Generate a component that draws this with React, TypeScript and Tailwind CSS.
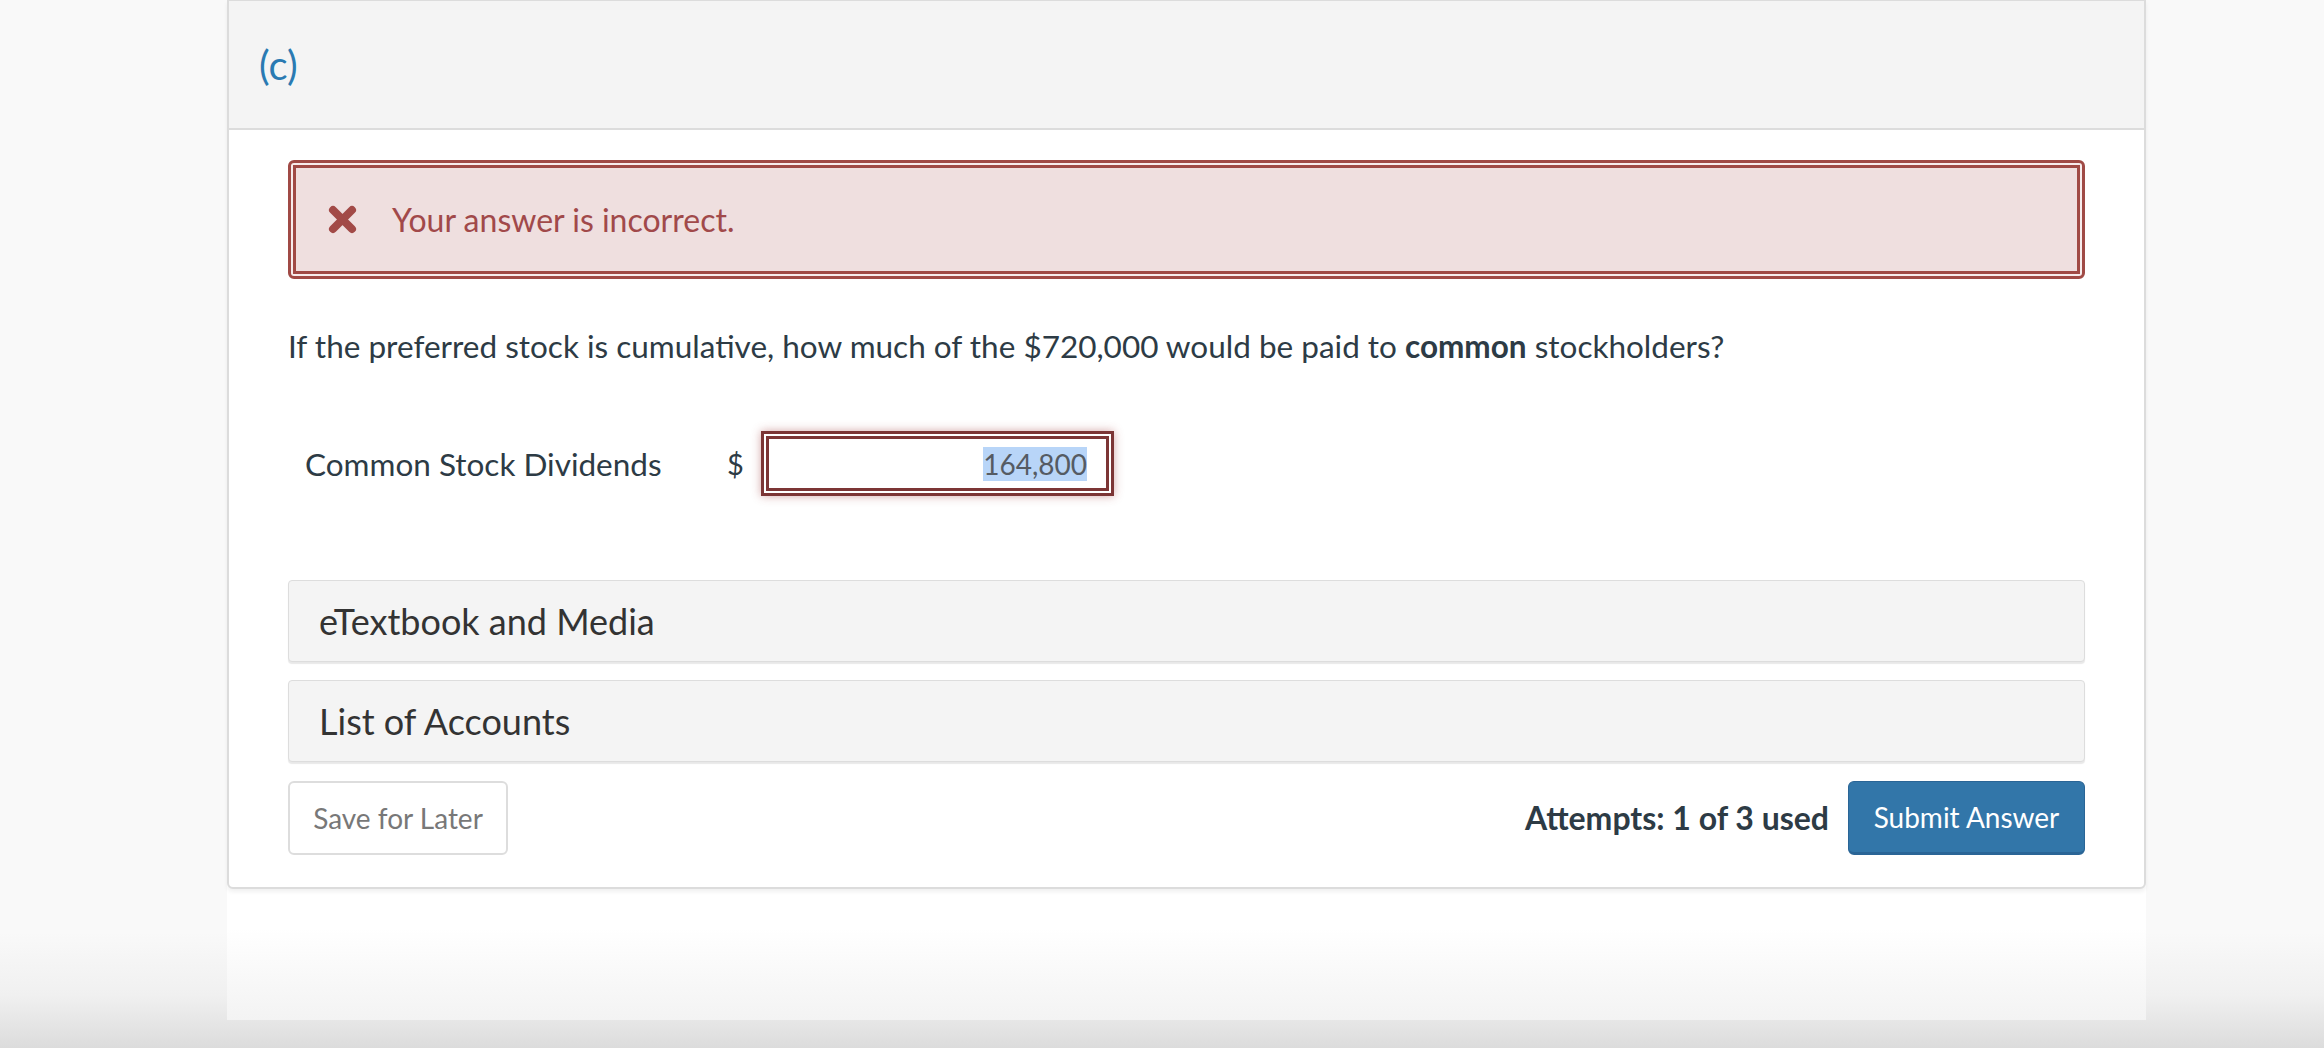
import React from 'react';

function TimesIcon() {
  return (
    <svg width="29" height="29" viewBox="0 0 29 29" className="shrink-0">
      <path d="M5 5 L24 24 M24 5 L5 24" stroke="#a24a47" strokeWidth="8" strokeLinecap="round" />
    </svg>
  );
}

export default function App() {
  return (
    <div className="min-h-[1048px] flex flex-col bg-[linear-gradient(to_bottom,#f9f9f9_0%,#f9f9f9_89%,#f0f0f0_95%,#e6e6e6_97.5%,#dcdcdc_100%)] font-['Lato','Open_Sans',sans-serif] text-[#2d3b45]">
      <div className="ml-[227px] w-[1919px] h-[1020px] flex flex-col bg-[linear-gradient(to_bottom,#ffffff_0%,#ffffff_91%,#f3f3f3_100%)]">
        <section className="bg-white border-2 border-t border-[#dcdcdc] rounded-b-[6px] shadow-[0_3px_4px_rgba(0,0,0,0.06)]">
          {/* header */}
          <div className="h-[129px] bg-[#f4f4f4] border-b-2 border-[#dcdcdc] flex items-center pl-[30px]">
            <span className="text-[40px] text-[#2a7ab2]">(c)</span>
          </div>

          <div className="px-[59px] pt-[30px] pb-[32px]">
            {/* alert */}
            <div className="h-[119px] rounded-[6px] border-[3px] border-[#a04a45] p-[2px] bg-[#f7ecec]">
              <div className="h-full border-[3px] border-[#a04a45] bg-[#efdfdf] flex items-center pl-[32px] gap-[35px]">
                <TimesIcon />
                <span className="text-[32px] text-[#a1494a]">Your answer is incorrect.</span>
              </div>
            </div>

            {/* question */}
            <p className="mt-[47px] text-[31.5px] leading-[40px] text-[#2d3b45]">
              If the preferred stock is cumulative, how much of the $720,000 would be paid to{' '}
              <b className="font-bold">common</b> stockholders?
            </p>

            <div className="mt-[65px] flex items-center pl-[17px]">
              <span className="w-[422px] text-[31.5px] leading-[40px]">Common Stock Dividends</span>
              <span className="text-[29px] leading-[40px] w-[34px]">$</span>
              <div className="w-[353px] h-[65px] border-[3px] border-[#7c3535] p-[2px] bg-white shadow-[0_0_9px_rgba(160,60,60,0.45)]">
                <div className="h-full border-[3px] border-[#7c3535] flex items-center justify-end pr-[19px]">
                  <span className="text-[28px] leading-[34px] bg-[#b8d5f8] text-[#555b63]">164,800</span>
                </div>
              </div>
            </div>

            {/* panels */}
            <div className="mt-[84px] h-[82px] rounded-[4px] border border-[#dddddd] bg-[#f4f4f4] shadow-[0_2px_1px_rgba(0,0,0,0.09)] flex items-center pl-[30px]">
              <span className="text-[36px] text-[#333333]">eTextbook and Media</span>
            </div>
            <div className="mt-[18px] h-[82px] rounded-[4px] border border-[#dddddd] bg-[#f4f4f4] shadow-[0_2px_1px_rgba(0,0,0,0.09)] flex items-center pl-[30px]">
              <span className="text-[36px] text-[#333333]">List of Accounts</span>
            </div>

            {/* footer buttons */}
            <div className="mt-[19px] flex items-center justify-between">
              <button className="w-[220px] h-[74px] rounded-[6px] border-2 border-[#dddddd] bg-white text-[28px] text-[#787878]">
                Save for Later
              </button>
              <div className="flex items-center gap-[19px]">
                <span className="text-[32px] font-bold text-[#2d3b45]">Attempts: 1 of 3 used</span>
                <button className="w-[237px] h-[74px] rounded-[6px] bg-[#3276a9] border border-b-[3px] border-[#2a6596] text-[28px] text-white">
                  Submit Answer
                </button>
              </div>
            </div>
          </div>
        </section>
      </div>
      <div className="h-[28px]" />
    </div>
  );
}
